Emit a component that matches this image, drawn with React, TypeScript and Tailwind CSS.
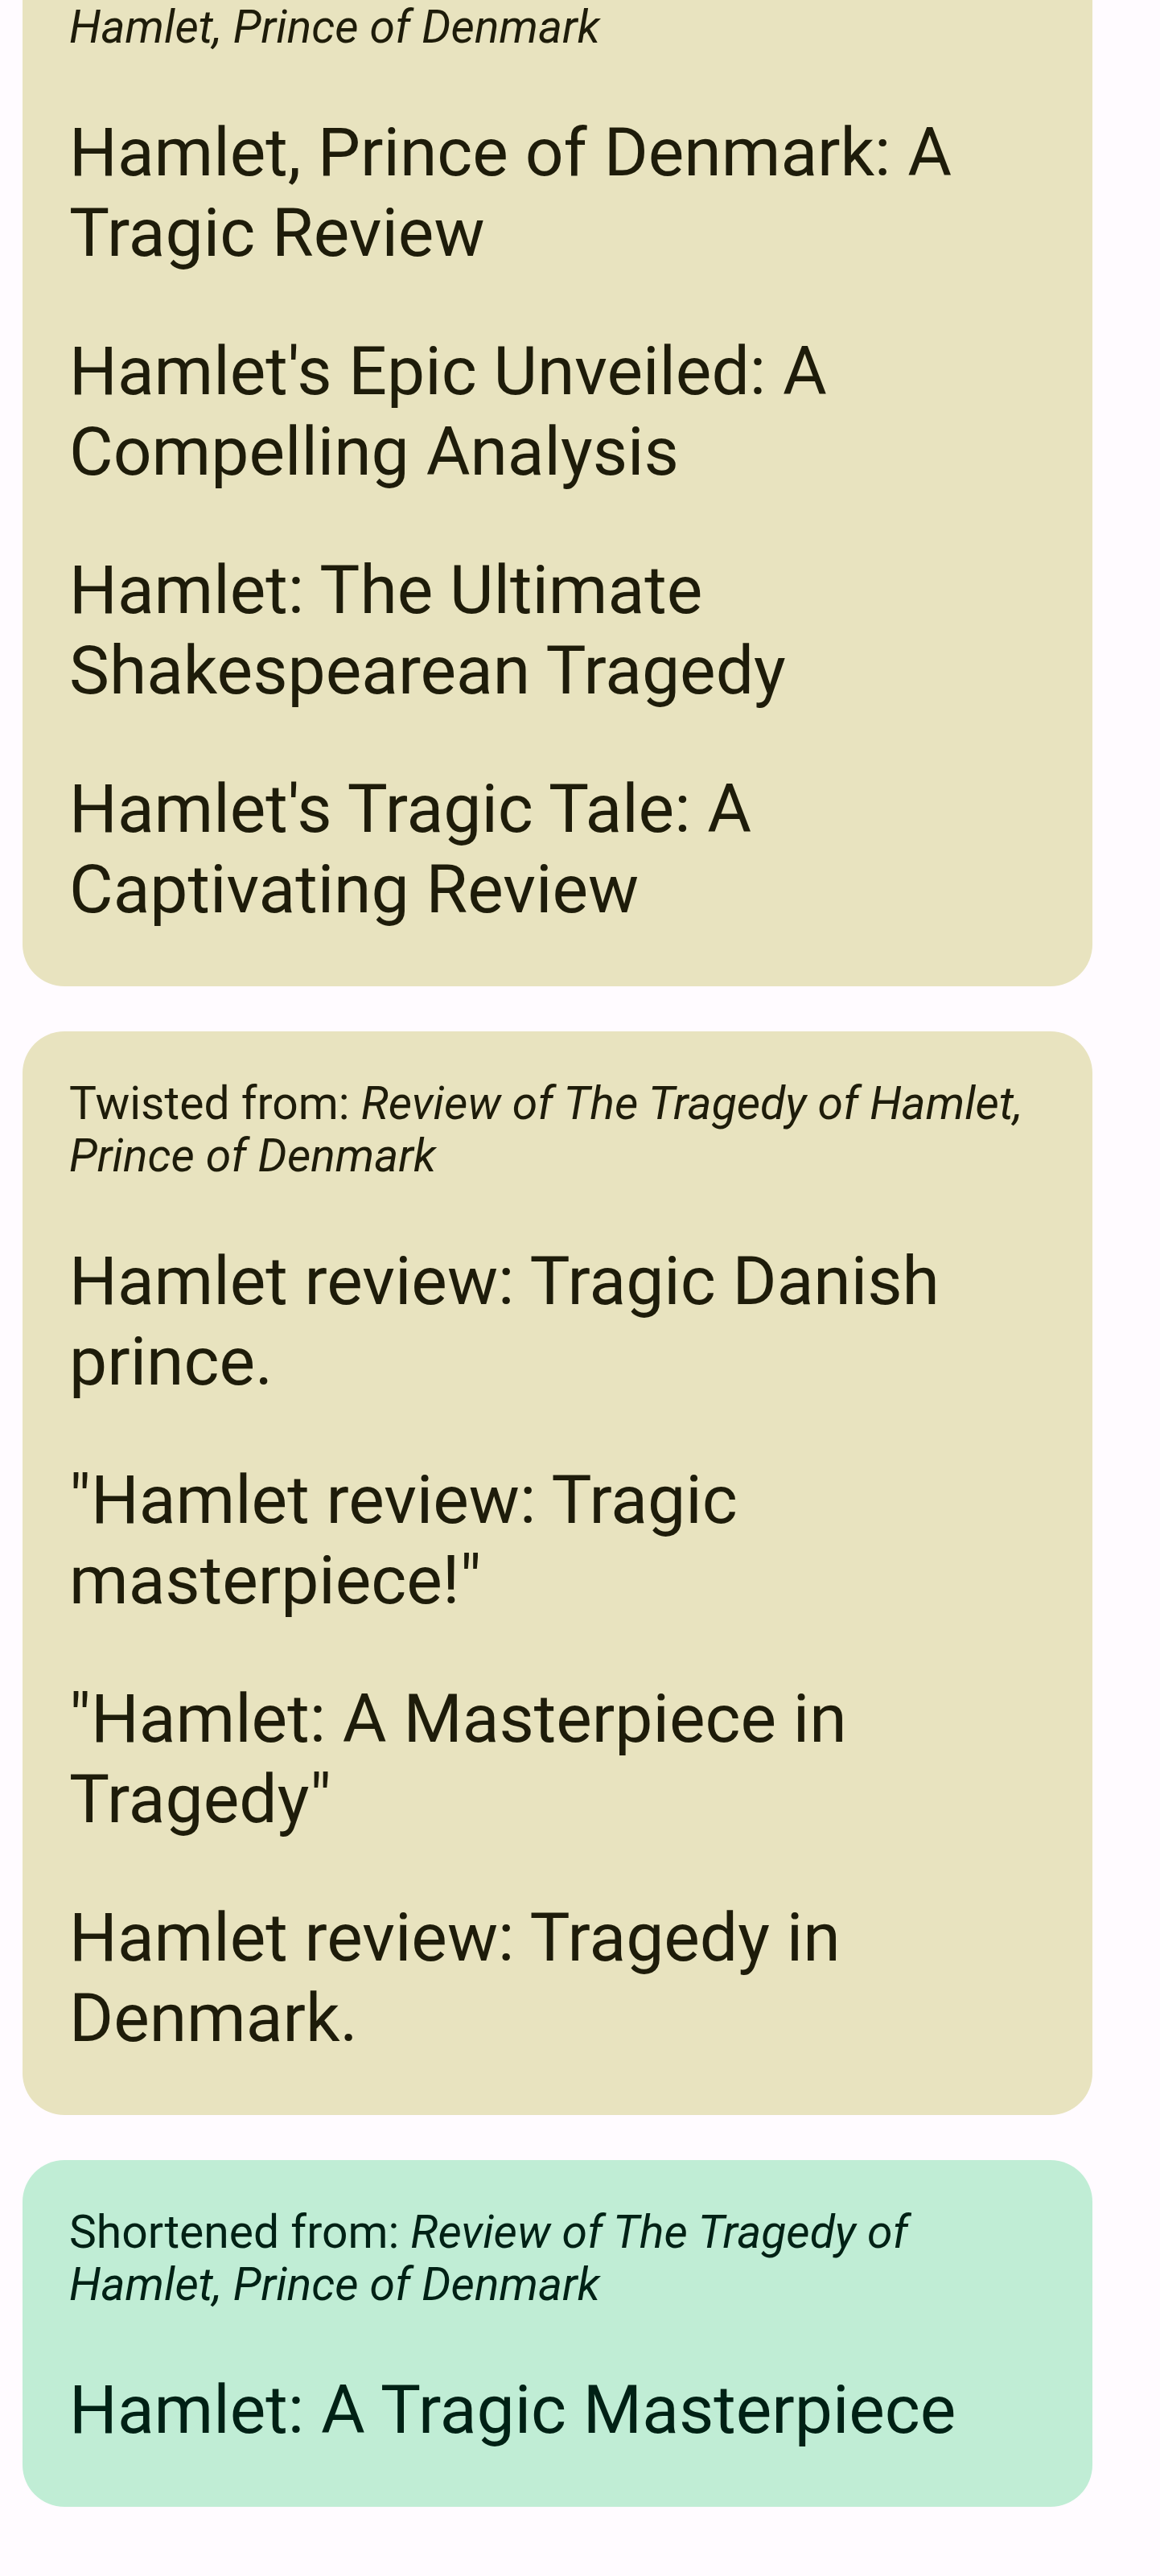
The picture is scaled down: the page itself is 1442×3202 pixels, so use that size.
import React from 'react';

interface CardProps {
  verb?: string;
  source: React.ReactNode;
  titles: string[];
  tone: 'olive' | 'mint';
  clipped?: boolean;
}

const ReviewCard: React.FC<CardProps> = ({ verb, source, titles, tone, clipped }) => {
  const bg = tone === 'olive' ? 'bg-[#e8e3bf] text-[#1e1c0a]' : 'bg-[#c0edd5] text-[#002115]';
  const shape = clipped ? 'rounded-b-[52px] pt-px' : 'rounded-[52px] pt-[57px]';
  return (
    <div className={`${bg} ${shape} w-[1330px] px-[58px] pb-[70px]`}>
      <p className="text-[57px] leading-[65px]">
        {verb && <span>{verb} </span>}
        <span className="italic">{source}</span>
      </p>
      <div className="mt-[74px] flex flex-col gap-[72px]">
        {titles.map((t) => (
          <p key={t} className="text-[84px] leading-[100px]">
            {t}
          </p>
        ))}
      </div>
    </div>
  );
};

export default function App() {
  return (
    <div className="min-h-screen bg-[#fffbff] font-['Roboto',sans-serif] pl-[28px]">
      <div className="flex flex-col gap-[56px] pb-[84px]">
        <ReviewCard
          tone="olive"
          clipped
          source="Hamlet, Prince of Denmark"
          titles={[
            'Hamlet, Prince of Denmark: A Tragic Review',
            "Hamlet's Epic Unveiled: A Compelling Analysis",
            'Hamlet: The Ultimate Shakespearean Tragedy',
            "Hamlet's Tragic Tale: A Captivating Review",
          ]}
        />
        <ReviewCard
          tone="olive"
          verb="Twisted from:"
          source="Review of The Tragedy of Hamlet, Prince of Denmark"
          titles={[
            'Hamlet review: Tragic Danish prince.',
            '"Hamlet review: Tragic masterpiece!"',
            '"Hamlet: A Masterpiece in Tragedy"',
            'Hamlet review: Tragedy in Denmark.',
          ]}
        />
        <ReviewCard
          tone="mint"
          verb="Shortened from:"
          source="Review of The Tragedy of Hamlet, Prince of Denmark"
          titles={['Hamlet: A Tragic Masterpiece']}
        />
      </div>
    </div>
  );
}
